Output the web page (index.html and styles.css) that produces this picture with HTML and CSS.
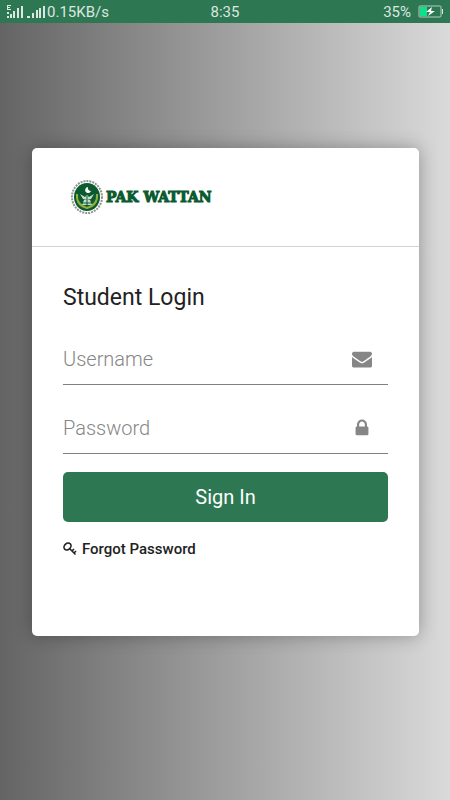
FILE: index.html
```html
<!DOCTYPE html>
<html lang="en">
  <head>
    <meta charset="UTF-8" />
    <meta name="viewport" content="width=device-width, initial-scale=1.0" />
    <title>Student Login</title>
    <link rel="stylesheet" href="styles.css">
  </head>
  <body>
    <header class="status-bar">
      <div class="status-left">
        <svg width="40" height="14" viewBox="0 0 40 14" fill="currentColor" aria-hidden="true">
          <path d="M1 0h4v1H2v1h2v1H2v1h3v1H1zM1 7h2v2H1zM1 11h2v2H1zM4 9h2v4H4zM7 6h2v7H7zM11 3h2v10h-2zM15 1h2v12h-2z" />
          <path d="M21 11h3v2h-3zM26 8h2v5h-2zM30 5h2v8h-2zM33 3h2v10h-2zM37 1h2v12h-2z" />
        </svg>
        <span>0.15KB/s</span>
      </div>
      <span>8:35</span>
      <div class="status-right">
        <span>35%</span>
        <svg width="26" height="13" viewBox="0 0 26 13" aria-hidden="true">
          <rect x="1" y="1" width="22" height="11" rx="1" fill="none" stroke="#b5cfc2" />
          <path d="M2 2h7v9H2z" fill="#0fe08c" />
          <path d="M24 4h1v5h-1z" fill="#d5e4dc" />
          <path d="M14 2L8 7h4l-2 4 7-5h-4z" fill="#fff" />
        </svg>
      </div>
    </header>

    <main class="page">
      <div class="card">
        <div class="card-header">
          <svg class="crest" width="34" height="36" viewBox="0 0 34 36" aria-hidden="true">
            <ellipse cx="17" cy="18" rx="15" ry="16" fill="#fff" stroke="#8b9690" stroke-width="2" stroke-dasharray="2 1" />
            <ellipse cx="17" cy="18" rx="13" ry="14" fill="#0b5a30" />
            <path d="M7 15q-1 11 10 14q11-3 10-14" fill="none" stroke="#8fae3c" stroke-width="2" />
            <path d="M18 8a3 3 0 1 0 3 4a3 3 0 0 1-3-4z" fill="#fff" />
            <path d="M10 15l5 3 2-2 2 2 5-3-3 5-4 1-4-1zM14 21h6l2 5H12z" fill="#c9dccb" />
            <path d="M17 17v9M12 24h10" stroke="#0b5a30" />
          </svg>
          <span class="brand">PAK WATTAN</span>
        </div>
        <form class="card-body">
          <h1>Student Login</h1>
          <div class="field">
            <input type="text" id="username" name="username" placeholder="Username" aria-label="Username" />
            <label for="username">
              <svg width="20" height="20" viewBox="0 0 1792 1792" fill="currentColor" aria-hidden="true">
                <path d="M1792 710v794q0 66-47 113t-113 47h-1472q-66 0-113-47t-47-113v-794q44 49 101 87 362 246 497 345 57 42 92.5 65.5t94.5 48 110 24.5h2q51 0 110-24.5t94.5-48 92.5-65.5q170-123 498-345 57-39 100-87zm0-294q0 79-49 151t-122 123q-376 261-468 325-10 7-42.5 31t-54 38.5-52 32.5-57.5 27-50 9h-2q-23 0-50-9t-57.5-27-52-32.5-54-38.5-42.5-31q-91-64-262-182.5t-205-142.5q-62-42-117-115.5t-55-136.5q0-78 41.5-130t118.5-52h1472q65 0 112.5 47t47.5 113z" />
              </svg>
            </label>
          </div>
          <div class="field">
            <input type="password" id="password" name="password" placeholder="Password" aria-label="Password" />
            <label for="password">
              <svg width="20" height="20" viewBox="0 0 1792 1792" fill="currentColor" aria-hidden="true">
                <path d="M640 768h512v-192q0-106-75-181t-181-75-181 75-75 181v192zm832 96v576q0 40-28 68t-68 28h-960q-40 0-68-28t-28-68v-576q0-40 28-68t68-28h32v-192q0-184 132-316t316-132 316 132 132 316v192h32q40 0 68 28t28 68z" />
              </svg>
            </label>
          </div>
          <button type="submit">Sign In</button>
          <a class="forgot" href="#">
            <svg width="14" height="14" viewBox="0 0 14 14" fill="none" stroke="currentColor" aria-hidden="true">
              <ellipse cx="4.5" cy="4.5" rx="3.8" ry="3" transform="rotate(-40 4.5 4.5)" stroke-width="1.6" />
              <path d="M6.5 6.5l6 6M9 9l2-2M11 11l2-2" stroke-width="1.6" />
            </svg>
            Forgot Password
          </a>
        </form>
      </div>
    </main>
  </body>
</html>
```
FILE: styles.css
```css
* {
  box-sizing: border-box;
}
body {
  margin: 0;
  min-height: 100vh;
  display: flex;
  flex-direction: column;
  font-family: Roboto, sans-serif;
  background: linear-gradient(to right, #646464, #dadada);
}
.status-bar {
  display: grid;
  grid-template-columns: 1fr auto 1fr;
  align-items: center;
  height: 23px;
  padding: 0 6px;
  background: #2d7752;
  color: #dbe8e1;
  font-size: 15px;
}
.status-left,
.status-right {
  display: flex;
  align-items: center;
}
.status-left {
  gap: 1px;
}
.status-right {
  justify-content: flex-end;
  gap: 7px;
}
.page {
  flex: 1;
  display: flex;
  flex-direction: column;
  justify-content: center;
  padding: 0 31px 39px 32px;
}
.card {
  min-height: 488px;
  background: #fff;
  border-radius: 5px;
  box-shadow: 0 0 18px rgba(0, 0, 0, 0.3);
}
.card-header {
  display: flex;
  align-items: center;
  gap: 2px;
  height: 99px;
  padding: 0 38px;
  border-bottom: 1px solid #d2d2d2;
}
.brand {
  font-family: "DejaVu Serif", serif;
  font-size: 14px;
  font-weight: bold;
  color: #0b5a30;
  -webkit-text-stroke: 1px #0b5a30;
}
.card-body {
  padding: 35px 31px;
}
h1 {
  margin: 0 0 20px;
  font-size: 23px;
  font-weight: normal;
  line-height: 32px;
  color: #222;
}
.field {
  display: flex;
  align-items: center;
  height: 51px;
  margin-bottom: 18px;
  padding-right: 16px;
  border-bottom: 1px solid #808080;
  color: #868686;
}
.field input {
  flex: 1;
  min-width: 0;
  padding: 0;
  border: 0;
  outline: 0;
  background: none;
  font-family: inherit;
  font-size: 20px;
  font-weight: 300;
  color: #333;
}
.field input::placeholder {
  color: #868686;
}
.field label {
  display: flex;
}
button {
  display: block;
  width: 100%;
  height: 50px;
  border: 0;
  border-radius: 5px;
  background: #2d7752;
  color: #fff;
  font-family: inherit;
  font-size: 20px;
}
.forgot {
  display: inline-flex;
  align-items: center;
  gap: 5px;
  margin-top: 18px;
  color: #222;
  font-size: 15px;
  font-weight: 500;
  text-decoration: none;
}
```
